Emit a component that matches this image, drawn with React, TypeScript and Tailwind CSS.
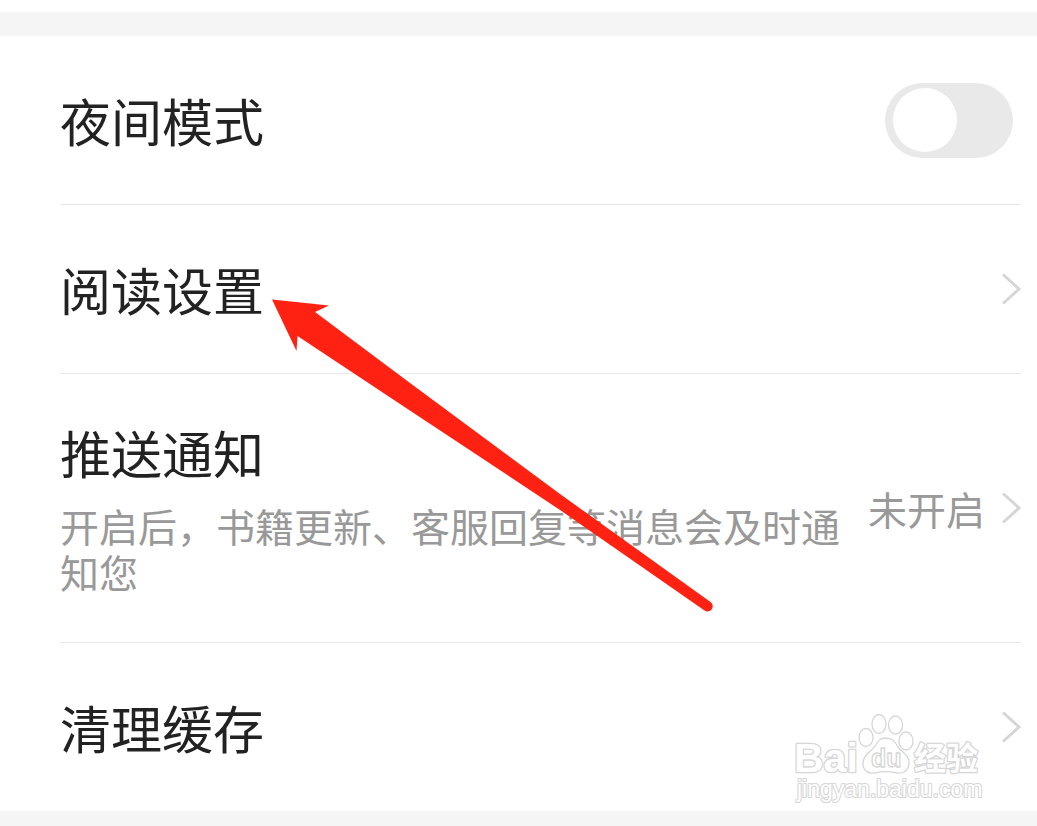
import { useState } from 'react';
import type { ReactNode } from 'react';

function Chevron() {
  return (
    <svg width="20" height="34" viewBox="0 0 20 34" fill="none" className="shrink-0" aria-hidden="true">
      <path d="M2 2.500 L18 17 L2 31.500" stroke="#d6d6d6" strokeWidth="3" strokeLinejoin="miter" />
    </svg>
  );
}

function RowFrame({ children, last = false }: { children: ReactNode; last?: boolean }) {
  return (
    <li className={last ? 'ml-15 mr-4' : 'ml-15 mr-4 border-b border-[#e8e8e8]'}>{children}</li>
  );
}

interface RowLinkProps {
  title: string;
  description?: string;
  value?: string;
  last?: boolean;
}

function RowLink({ title, description, value, last = false }: RowLinkProps) {
  return (
    <RowFrame last={last}>
      <a href="#" className="flex items-center gap-6">
        <span className={description ? 'flex-1 min-w-0 pt-10 pb-12' : 'flex-1 min-w-0 py-[46px]'}>
          <span className="block text-[51px] leading-[76px] text-[#222222]">{title}</span>
          {description && (
            <span className="block mt-3 text-[39px] leading-[46px] text-[#999999]">{description}</span>
          )}
        </span>
        <span className="flex items-center gap-4 shrink-0">
          {value && <span className="text-[39px] leading-[46px] text-[#999999]">{value}</span>}
          <Chevron />
        </span>
      </a>
    </RowFrame>
  );
}

function NightModeRow() {
  const [enabled, setEnabled] = useState(false);

  return (
    <RowFrame>
      <label className="flex items-center justify-between py-[46px]">
        <span className="text-[51px] leading-[76px] text-[#222222]">夜间模式</span>
        <input
          type="checkbox"
          role="switch"
          checked={enabled}
          onChange={(e) => setEnabled(e.target.checked)}
          className="appearance-none flex items-center w-32 h-[75px] mr-2 px-2 rounded-full bg-[#e9e9e9] checked:bg-green-500 checked:justify-end before:block before:size-16 before:rounded-full before:bg-white"
        />
      </label>
    </RowFrame>
  );
}

function Arrow() {
  return (
    <svg
      width="442"
      height="314"
      viewBox="0 0 442 314"
      className="absolute left-[271px] top-[298px] pointer-events-none"
      aria-hidden="true"
    >
      <path
        d="M1 1.5 L58 7.5 L44 14 L139 85 L289 196 L439.500 304 A5 5 0 0 1 433.500 312.500 L289 212 L123 102 L26.500 38 L25.500 53 Z"
        fill="#ff2212"
      />
    </svg>
  );
}

function Watermark() {
  return (
    <svg
      width="190"
      height="92"
      viewBox="0 0 190 92"
      className="absolute right-[53px] bottom-[6px] pointer-events-none"
      fill="#ffffff"
      stroke="#d6d6d6"
      strokeWidth="1.3"
      strokeLinejoin="round"
    >
      <g fontWeight="bold" strokeWidth="2.6" paintOrder="stroke">
        <text x="0" y="59" fontSize="41" fontFamily='"Liberation Sans", sans-serif'>Bai</text>
        <text x="120" y="57" fontSize="32" fontFamily='"Noto Sans CJK SC", sans-serif'>经验</text>
      </g>
      <ellipse cx="72" cy="24.500" rx="7" ry="9" />
      <ellipse cx="85" cy="11" rx="7" ry="9.500" />
      <ellipse cx="101.500" cy="12" rx="7" ry="9" />
      <ellipse cx="112" cy="28" rx="7" ry="9" />
      <path d="M92 25 C99 25 101 29 104 34 C109 40 116 43 115 51 C114 58 109 61 103 60 C95 58 88 58 81 60 C74 61 69 58 69 50 C69 42 77 39 81 33 C84 28 86 25 92 25 Z" />
      <text x="77" y="54" fontSize="25" fontWeight="bold" fontFamily='"Liberation Sans", sans-serif'>du</text>
      <text
        x="3"
        y="84"
        fontSize="23"
        fontFamily='"Liberation Sans", sans-serif'
        strokeWidth="2.2"
        paintOrder="stroke"
      >
        jingyan.baidu.com
      </text>
    </svg>
  );
}

export default function App() {
  return (
    <main className='relative min-h-screen overflow-hidden bg-[#f5f5f5] font-["Noto_Sans_CJK_SC",sans-serif]'>
      <div className="h-3 bg-white" />
      <div className="relative mt-6 bg-white">
        <ul>
          <NightModeRow />
          <RowLink title="阅读设置" />
          <RowLink
            title="推送通知"
            description="开启后，书籍更新、客服回复等消息会及时通知您"
            value="未开启"
          />
          <RowLink title="清理缓存" last />
        </ul>
        <Watermark />
      </div>
      <Arrow />
    </main>
  );
}
